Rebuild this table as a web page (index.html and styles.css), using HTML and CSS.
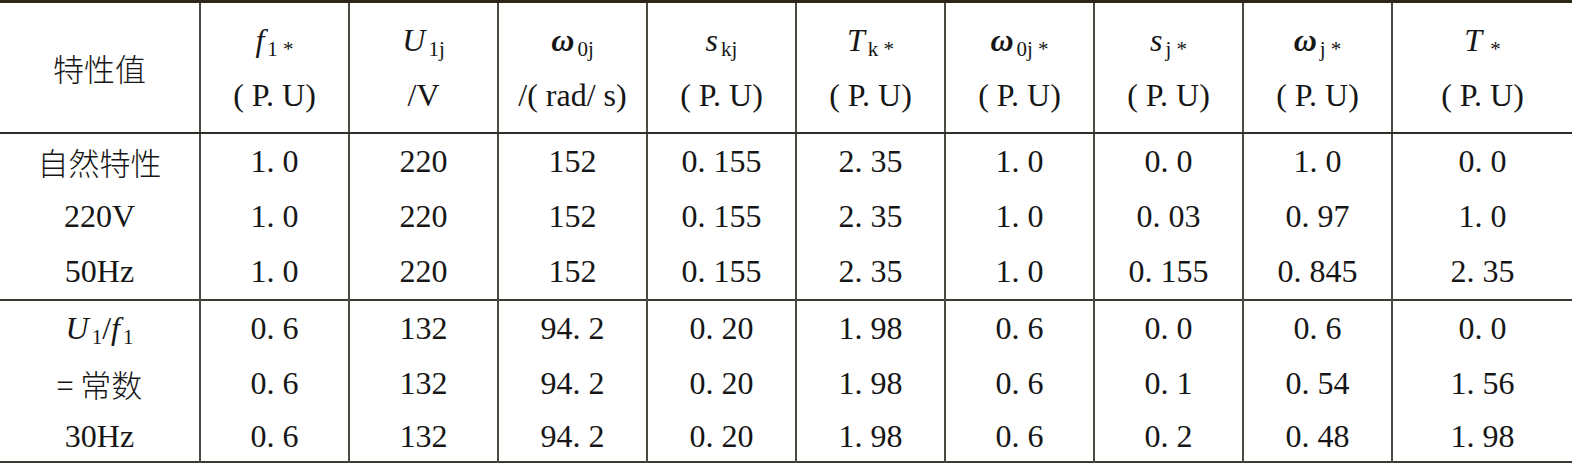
FILE: index.html
```html
<!DOCTYPE html>
<html lang="zh">
<head>
<meta charset="utf-8">
<link rel="stylesheet" href="styles.css">
</head>
<body>
<table class="data">
  <colgroup>
    <col class="c-label">
    <col class="c-val"><col class="c-val"><col class="c-val"><col class="c-val">
    <col class="c-val"><col class="c-val"><col class="c-val"><col class="c-val">
    <col class="c-last">
  </colgroup>
  <thead>
    <tr class="head">
      <th class="cjk">特性值</th>
      <th><span class="ln"><i>f</i><sub>1 *</sub></span><span class="ln">( P. U)</span></th>
      <th><span class="ln"><i>U</i><sub>1j</sub></span><span class="ln">/V</span></th>
      <th><span class="ln"><b><i>ω</i></b><sub>0j</sub></span><span class="ln">/( rad/ s)</span></th>
      <th><span class="ln"><i>s</i><sub>kj</sub></span><span class="ln">( P. U)</span></th>
      <th><span class="ln"><i>T</i><sub>k *</sub></span><span class="ln">( P. U)</span></th>
      <th><span class="ln"><b><i>ω</i></b><sub>0j *</sub></span><span class="ln">( P. U)</span></th>
      <th><span class="ln"><i>s</i><sub>j *</sub></span><span class="ln">( P. U)</span></th>
      <th><span class="ln"><b><i>ω</i></b><sub>j *</sub></span><span class="ln">( P. U)</span></th>
      <th><span class="ln"><i>T</i><sub>&nbsp;*</sub></span><span class="ln">( P. U)</span></th>
    </tr>
  </thead>
  <tbody class="group">
    <tr><td class="cjk">自然特性</td><td>1. 0</td><td>220</td><td>152</td><td>0. 155</td><td>2. 35</td><td>1. 0</td><td>0. 0</td><td>1. 0</td><td>0. 0</td></tr>
    <tr><td>220V</td><td>1. 0</td><td>220</td><td>152</td><td>0. 155</td><td>2. 35</td><td>1. 0</td><td>0. 03</td><td>0. 97</td><td>1. 0</td></tr>
    <tr><td>50Hz</td><td>1. 0</td><td>220</td><td>152</td><td>0. 155</td><td>2. 35</td><td>1. 0</td><td>0. 155</td><td>0. 845</td><td>2. 35</td></tr>
  </tbody>
  <tbody class="group">
    <tr class="first"><td><i>U</i><sub>1</sub>/<i>f</i><sub>1</sub></td><td>0. 6</td><td>132</td><td>94. 2</td><td>0. 20</td><td>1. 98</td><td>0. 6</td><td>0. 0</td><td>0. 6</td><td>0. 0</td></tr>
    <tr><td class="cjk">= 常数</td><td>0. 6</td><td>132</td><td>94. 2</td><td>0. 20</td><td>1. 98</td><td>0. 6</td><td>0. 1</td><td>0. 54</td><td>1. 56</td></tr>
    <tr class="last"><td>30Hz</td><td>0. 6</td><td>132</td><td>94. 2</td><td>0. 20</td><td>1. 98</td><td>0. 6</td><td>0. 2</td><td>0. 48</td><td>1. 98</td></tr>
  </tbody>
</table>
</body>
</html>
```

FILE: styles.css
```css
html, body {
  margin: 0;
  padding: 0;
  background: #ffffff;
}

.data {
  width: 1572px;
  table-layout: fixed;
  border-collapse: collapse;
  font-family: "Liberation Serif", "Noto Sans CJK SC", serif;
  font-size: 32px;
  color: #161616;
  border-top: 3px solid #2b2719;
  border-bottom: 2px solid #3a3a32;
}

.c-label { width: 200px; }
.c-val { width: 149px; }
.c-last { width: 180px; }

.data th,
.data td {
  padding: 0;
  text-align: center;
  vertical-align: middle;
  border-left: 2px solid #4a4a42;
  font-weight: normal;
  white-space: nowrap;
}

.data th:first-child,
.data td:first-child {
  border-left: none;
}

.head th {
  height: 129px;
  border-bottom: 2px solid #2e2e28;
}

.head th .ln {
  display: block;
  height: 55px;
  line-height: 55px;
}

.data .cjk {
  font-family: "Noto Sans CJK SC", "Liberation Serif", sans-serif;
  font-size: 31px;
  font-weight: 300;
}

.data td {
  height: 55px;
  line-height: 55px;
}

.group .last td {
  height: 50px;
  line-height: 50px;
  vertical-align: top;
}

.group + .group tr.first td {
  border-top: 2px solid #3a3a32;
}

.data sub {
  font-size: 21px;
  line-height: 0;
  vertical-align: -5px;
  margin-left: 3px;
}

.data b i {
  font-weight: bold;
}
```
